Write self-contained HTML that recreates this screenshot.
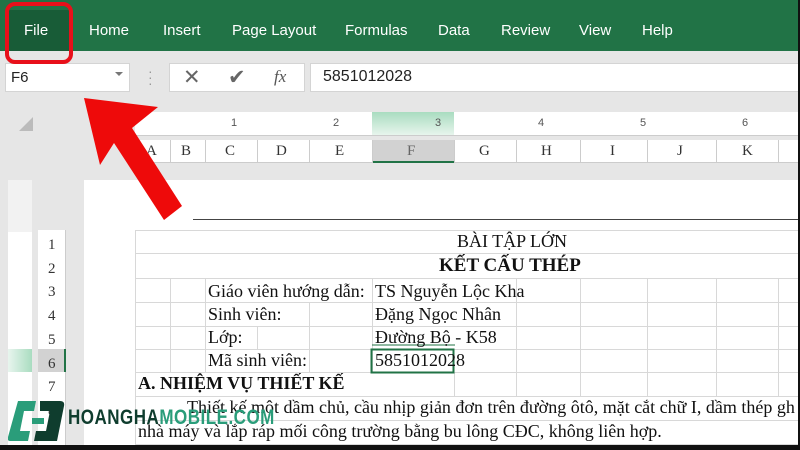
<!DOCTYPE html>
<html><head><meta charset="utf-8"><style>
*{margin:0;padding:0;box-sizing:border-box}
body{width:800px;height:450px;overflow:hidden;background:#e6e6e6;position:relative;font-family:"Liberation Sans",sans-serif}
.abs{position:absolute}
.rib{left:0;top:0;width:800px;height:51px;background:#217346}
.tab{top:22px;color:#fff;font-size:15px}
.ser{font-family:"Liberation Serif","Noto Serif CJK SC",serif}
.cell{position:absolute;font-family:"Liberation Serif",serif;font-size:18px;color:#111;white-space:nowrap}
</style></head><body>
<div class="abs rib"></div>
<div class="abs" style="left:9px;top:10px;width:60px;height:41px;background:#185c37"></div>
<div class="abs tab" style="left:24px">File</div>
<div class="abs tab" style="left:89px">Home</div>
<div class="abs tab" style="left:163px">Insert</div>
<div class="abs tab" style="left:232px">Page Layout</div>
<div class="abs tab" style="left:345px">Formulas</div>
<div class="abs tab" style="left:438px">Data</div>
<div class="abs tab" style="left:501px">Review</div>
<div class="abs tab" style="left:579px">View</div>
<div class="abs tab" style="left:642px">Help</div>
<!-- formula bar -->
<div class="abs" style="left:5px;top:63px;width:125px;height:29px;background:#fff;border:1px solid #d4d4d4"></div>
<div class="abs" style="left:11px;top:69px;font-size:15px;color:#222">F6</div>
<div class="abs" style="left:115px;top:72px;width:0;height:0;border-left:4px solid transparent;border-right:4px solid transparent;border-top:4px solid #777"></div>
<div class="abs" style="left:148px;top:68px;color:#999;font-size:14px;line-height:6px">·<br>·<br>·</div>
<div class="abs" style="left:169px;top:63px;width:136px;height:29px;background:#fff;border:1px solid #d4d4d4"></div>
<div class="abs" style="left:183px;top:65px;color:#666;font-size:21px">✕</div>
<div class="abs" style="left:228px;top:65px;color:#666;font-size:21px">✔</div>
<div class="abs ser" style="left:274px;top:67px;color:#555;font-size:17px;font-style:italic">fx</div>
<div class="abs" style="left:310px;top:63px;width:490px;height:29px;background:#fff;border:1px solid #d4d4d4"></div>
<div class="abs" style="left:323px;top:68px;font-size:16px;color:#222">5851012028</div>
<!-- corner -->
<div class="abs" style="left:19px;top:117px;width:0;height:0;border-left:14px solid transparent;border-bottom:14px solid #bbb"></div>
<!-- ruler -->
<div class="abs" style="left:135px;top:112px;width:665px;height:24px;background:#fff"></div>
<div class="abs" style="left:372px;top:112px;width:82px;height:24px;background:linear-gradient(#a9dcc0,#eaf6ef)"></div>
<div class="abs" style="left:135px;top:135px;width:665px;height:1px;background:#ccc"></div>
<div class="abs" style="left:231px;top:117px;font-size:11px;color:#555">1</div>
<div class="abs" style="left:333px;top:117px;font-size:11px;color:#555">2</div>
<div class="abs" style="left:435px;top:117px;font-size:11px;color:#555">3</div>
<div class="abs" style="left:538px;top:117px;font-size:11px;color:#555">4</div>
<div class="abs" style="left:640px;top:117px;font-size:11px;color:#555">5</div>
<div class="abs" style="left:742px;top:117px;font-size:11px;color:#555">6</div>
<!-- column headers -->
<div class="abs" style="left:135px;top:140px;width:665px;height:23px;background:#fff;border-bottom:1px solid #ccc"></div>
<div class="abs" style="left:372px;top:140px;width:82px;height:23px;background:#d2d2d2;border-bottom:2px solid #217346"></div>
<div class="abs ser" style="top:143px;left:0;width:800px;height:20px;font-size:15px;color:#333">
<span class="abs" style="left:146px">A</span><span class="abs" style="left:181px">B</span><span class="abs" style="left:225px">C</span><span class="abs" style="left:276px">D</span><span class="abs" style="left:335px">E</span><span class="abs" style="left:407px;color:#666">F</span><span class="abs" style="left:479px">G</span><span class="abs" style="left:541px">H</span><span class="abs" style="left:610px">I</span><span class="abs" style="left:677px">J</span><span class="abs" style="left:742px">K</span></div>
<svg class="abs" style="left:0;top:140px" width="800" height="24">
<g stroke="#ccc"><line x1="170.5" y1="0" x2="170.5" y2="23"/><line x1="205.5" y1="0" x2="205.5" y2="23"/><line x1="257.5" y1="0" x2="257.5" y2="23"/><line x1="309.5" y1="0" x2="309.5" y2="23"/><line x1="372.5" y1="0" x2="372.5" y2="23"/><line x1="454.5" y1="0" x2="454.5" y2="23"/><line x1="516.5" y1="0" x2="516.5" y2="23"/><line x1="580.5" y1="0" x2="580.5" y2="23"/><line x1="647.5" y1="0" x2="647.5" y2="23"/><line x1="716.5" y1="0" x2="716.5" y2="23"/><line x1="778.5" y1="0" x2="778.5" y2="23"/></g></svg>
<!-- left vertical ruler -->
<div class="abs" style="left:8px;top:180px;width:24px;height:265px;background:#fff"></div>
<div class="abs" style="left:8px;top:180px;width:24px;height:52px;background:#f2f2f2"></div>
<div class="abs" style="left:8px;top:349px;width:24px;height:23px;background:linear-gradient(90deg,#e8f5ee,#a9dcc0)"></div>
<!-- row headers -->
<div class="abs" style="left:38px;top:230px;width:28px;height:215px;background:#fff;border-right:1px solid #ccc"></div>
<div class="abs" style="left:38px;top:349px;width:28px;height:23px;background:#d2d2d2;border-right:2px solid #217346"></div>
<div class="abs ser" style="left:48px;top:234px;font-size:15px;line-height:23.7px;color:#333">1<br>2<br>3<br>4<br>5<br>6<br>7<br>8<br>9</div>
<!-- page -->
<div class="abs" style="left:84px;top:180px;width:716px;height:270px;background:#fff"></div>
<div class="abs" style="left:193px;top:219px;width:607px;height:1px;background:#444"></div>
<svg class="abs" style="left:0;top:0" width="800" height="450">
<g stroke="#d8d8d8" fill="none">
<rect x="135.5" y="230.5" width="680" height="230"/>
<line x1="135" y1="253.5" x2="800" y2="253.5"/><line x1="135" y1="278.5" x2="800" y2="278.5"/><line x1="135" y1="302.5" x2="800" y2="302.5"/><line x1="135" y1="326.5" x2="800" y2="326.5"/><line x1="135" y1="349.5" x2="800" y2="349.5"/><line x1="135" y1="372.5" x2="800" y2="372.5"/><line x1="135" y1="396.5" x2="800" y2="396.5"/><line x1="135" y1="420.5" x2="800" y2="420.5"/><line x1="135" y1="444.5" x2="800" y2="444.5"/>
<line x1="170.5" y1="278" x2="170.5" y2="372"/><line x1="205.5" y1="278" x2="205.5" y2="372"/><line x1="257.5" y1="326" x2="257.5" y2="349"/><line x1="309.5" y1="302" x2="309.5" y2="372"/><line x1="372.5" y1="278" x2="372.5" y2="372"/><line x1="454.5" y1="372" x2="454.5" y2="396"/><line x1="516.5" y1="278" x2="516.5" y2="396"/><line x1="580.5" y1="278" x2="580.5" y2="396"/><line x1="647.5" y1="278" x2="647.5" y2="396"/><line x1="716.5" y1="278" x2="716.5" y2="396"/><line x1="778.5" y1="278" x2="778.5" y2="396"/>
</g>
<rect x="371.5" y="349.5" width="82" height="23" fill="none" stroke="#217346" stroke-width="2"/>
<line x1="372" y1="345" x2="455" y2="345" stroke="#217346" stroke-width="1"/>
</svg>
<div class="cell" style="left:457px;top:231px">BÀI TẬP LỚN</div>
<div class="cell" style="left:439px;top:255px;font-weight:bold;font-size:19px">KẾT CẤU THÉP</div>
<div class="cell" style="left:208px;top:281px">Giáo viên hướng dẫn:</div>
<div class="cell" style="left:375px;top:281px">TS Nguyễn Lộc Kha</div>
<div class="cell" style="left:208px;top:304px">Sinh viên:</div>
<div class="cell" style="left:375px;top:304px">Đặng Ngọc Nhân</div>
<div class="cell" style="left:208px;top:327px">Lớp:</div>
<div class="cell" style="left:375px;top:327px">Đường Bộ - K58</div>
<div class="cell" style="left:208px;top:350px">Mã sinh viên:</div>
<div class="cell" style="left:375px;top:350px">5851012028</div>
<div class="cell" style="left:138px;top:373px;font-weight:bold">A. NHIỆM VỤ THIẾT KẾ</div>
<div class="cell" style="left:187px;top:397px">Thiết kế một dầm chủ, cầu nhịp giản đơn trên đường ôtô, mặt cắt chữ I, dầm thép gh</div>
<div class="cell" style="left:138px;top:421px">nhà máy và lắp ráp mối công trường bằng bu lông CĐC, không liên hợp.</div>
<!-- borders -->
<div class="abs" style="left:798px;top:0;width:2px;height:450px;background:#111"></div>
<div class="abs" style="left:0;top:445px;width:800px;height:5px;background:#111"></div>
<!-- red overlay -->
<svg class="abs" style="left:0;top:0" width="800" height="450">
<rect x="7" y="4" width="64" height="58" rx="8" fill="none" stroke="#e8101a" stroke-width="4"/>
<polygon points="84,98 158,107 132,128 182,206 164,220 114,143 100,165" fill="#ee0a0a"/>
</svg>
<!-- logo -->
<svg class="abs" style="left:8px;top:401px" width="58" height="40">
<path d="M10 0 H28 L26 10 H16 L12 30 H22 L20 40 H2 Q-1 40 0 36 Z" fill="#2a9d7a"/>
<path d="M32 0 H52 Q57 0 56 5 L49 40 H26 L28 30 H38 L42 10 H32 Z" fill="#0f3d2e"/>
<rect x="24" y="17" width="12" height="6" fill="#2a9d7a"/>
</svg>
<div class="abs" style="left:68px;top:405px;font-size:17px;font-weight:bold;letter-spacing:0.5px;transform:scaleY(1.25);transform-origin:0 0;font-family:'Liberation Sans',sans-serif"><span style="color:#0f3d2e">HOANGHA</span><span style="color:#2a9d7a">MOBILE.COM</span></div>
</body></html>
